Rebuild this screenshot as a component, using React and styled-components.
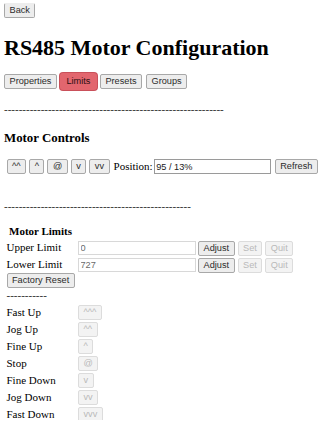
import React from "react";
import styled, { createGlobalStyle, css } from "styled-components";

const GlobalStyle = createGlobalStyle`
  html, body { margin: 0; padding: 0; background: #ffffff; }
  body {
    font-family: "Liberation Serif", "Times New Roman", serif;
    font-size: 11px;
    color: #000000;
  }
`;

const Page = styled.div`
  width: 331px;
  height: 420px;
  overflow: hidden;
  box-sizing: border-box;
  padding: 3px 4px 0 4px;
`;

const Button = styled.button`
  box-sizing: border-box;
  height: 15px;
  padding: 0 4.5px;
  margin: 0;
  font-family: "Liberation Sans", Arial, sans-serif;
  font-size: 9.2px;
  line-height: 13px;
  color: #2b2b2b;
  background: #ededed;
  border: 1px solid #a8a8a8;
  border-radius: 2px;
  white-space: nowrap;
  flex: none;
  ${(p) =>
    p.$active &&
    css`
      background: #e2666e;
      border-color: #e2666e;
      box-shadow: 0 0 0 1px #e2666e, 0 0 0 2px #c9505a;
      color: #2a1012;
    `}
  ${(p) =>
    p.$muted &&
    css`
      background: #f3f3f3;
      border-color: #dcdcdc;
      color: #b9b9b9;
    `}
  ${(p) =>
    p.$clipTop &&
    css`
      border-top-color: transparent;
    `}
`;

const TopBar = styled.div`
  display: flex;
  height: 15px;
`;

const Title = styled.h1`
  margin: 18.5px 0 0 0;
  font-size: 22px;
  line-height: 22px;
  font-weight: bold;
  white-space: nowrap;
`;

const Tabs = styled.div`
  display: flex;
  align-items: center;
  gap: 4px;
  height: 19px;
  margin-top: 13.5px;
`;

const Divider = styled.div`
  line-height: 13px;
  margin-top: ${(p) => p.$top}px;
  color: #222222;
  white-space: nowrap;
`;

const SectionTitle = styled.h3`
  margin: 14.9px 0 0 0;
  font-size: 12.87px;
  line-height: 15px;
  font-weight: bold;
`;

const ControlRow = styled.div`
  display: flex;
  align-items: center;
  gap: 3px;
  height: 15px;
  margin-top: 13.8px;
  padding-left: 2.5px;
`;

const PositionGroup = styled.div`
  display: flex;
  align-items: center;
  gap: 1px;
  margin: 0 1px;
`;

const Label = styled.span`
  line-height: 15px;
  white-space: nowrap;
`;

const TextField = styled.input`
  box-sizing: border-box;
  width: ${(p) => p.$w}px;
  height: ${(p) => p.$h || 15}px;
  margin: 0;
  padding: 0 1.5px;
  font-family: "Liberation Sans", Arial, sans-serif;
  font-size: 9.2px;
  color: ${(p) => (p.$soft ? "#6a6a6a" : "#1a1a1a")};
  background: #ffffff;
  border: 1px solid ${(p) => (p.$soft ? "#d8d8d8" : "#9a9a9a")};
  border-radius: 0;
  outline: none;
`;

const LimitsSection = styled.div`
  padding-left: 2.5px;
`;

const LimitsTitle = styled.div`
  margin-top: 12.5px;
  padding-left: 2.5px;
  font-weight: bold;
  line-height: 13px;
`;

const LimitsGrid = styled.div`
  display: grid;
  grid-template-columns: 71.5px auto;
  row-gap: 2px;
  margin-top: 3.2px;
  justify-content: start;
`;

const LimitLabel = styled.div`
  line-height: 13px;
  white-space: nowrap;
`;

const LimitControls = styled.div`
  display: flex;
  align-items: flex-start;
  gap: 3px;
  height: 15px;
`;

const InputWrap = styled.div`
  display: flex;
  margin-right: -1px;
`;

const ResetRow = styled.div`
  display: flex;
`;

const MoveGrid = styled.div`
  display: grid;
  grid-template-columns: 71.5px auto;
  row-gap: 2px;
  margin-top: 3.7px;
  justify-content: start;
`;

const MoveLabel = styled.div`
  line-height: 15px;
  height: 15px;
  white-space: nowrap;
`;

const MoveCell = styled.div`
  display: flex;
  height: 15px;
`;

const tabs = ["Properties", "Limits", "Presets", "Groups"];
const controls = ["^^", "^", "@", "v", "vv"];
const limits = [
  { label: "Upper Limit", value: "0" },
  { label: "Lower Limit", value: "727" },
];
const moves = [
  { label: "Fast Up", sym: "^^^" },
  { label: "Jog Up", sym: "^^" },
  { label: "Fine Up", sym: "^" },
  { label: "Stop", sym: "@" },
  { label: "Fine Down", sym: "v" },
  { label: "Jog Down", sym: "vv" },
  { label: "Fast Down", sym: "vvv" },
];

export default function App() {
  return (
    <>
      <GlobalStyle />
      <Page>
        <TopBar>
          <Button $clipTop>Back</Button>
        </TopBar>
        <Title>RS485 Motor Configuration</Title>
        <Tabs>
          {tabs.map((t) => (
            <Button key={t} $active={t === "Limits"}>
              {t}
            </Button>
          ))}
        </Tabs>
        <Divider $top={11.8}>{"-".repeat(60)}</Divider>
        <SectionTitle>Motor Controls</SectionTitle>
        <ControlRow>
          {controls.map((c) => (
            <Button key={c}>{c}</Button>
          ))}
          <PositionGroup>
            <Label>Position:</Label>
            <TextField $w={117} defaultValue="95 / 13%" />
          </PositionGroup>
          <Button>Refresh</Button>
        </ControlRow>
        <Divider $top={25.3}>{"-".repeat(51)}</Divider>
        <LimitsSection>
          <LimitsTitle>Motor Limits</LimitsTitle>
          <LimitsGrid>
            {limits.map((l) => (
              <React.Fragment key={l.label}>
                <LimitLabel>{l.label}</LimitLabel>
                <LimitControls>
                  <InputWrap>
                    <TextField $w={118} $h={14} $soft readOnly defaultValue={l.value} />
                  </InputWrap>
                  <Button>Adjust</Button>
                  <Button $muted>Set</Button>
                  <Button $muted>Quit</Button>
                </LimitControls>
              </React.Fragment>
            ))}
          </LimitsGrid>
          <ResetRow>
            <Button>Factory Reset</Button>
          </ResetRow>
          <Divider $top={0.3}>{"-".repeat(11)}</Divider>
          <MoveGrid>
            {moves.map((m) => (
              <React.Fragment key={m.label}>
                <MoveLabel>{m.label}</MoveLabel>
                <MoveCell>
                  <Button $muted>{m.sym}</Button>
                </MoveCell>
              </React.Fragment>
            ))}
          </MoveGrid>
        </LimitsSection>
      </Page>
    </>
  );
}
